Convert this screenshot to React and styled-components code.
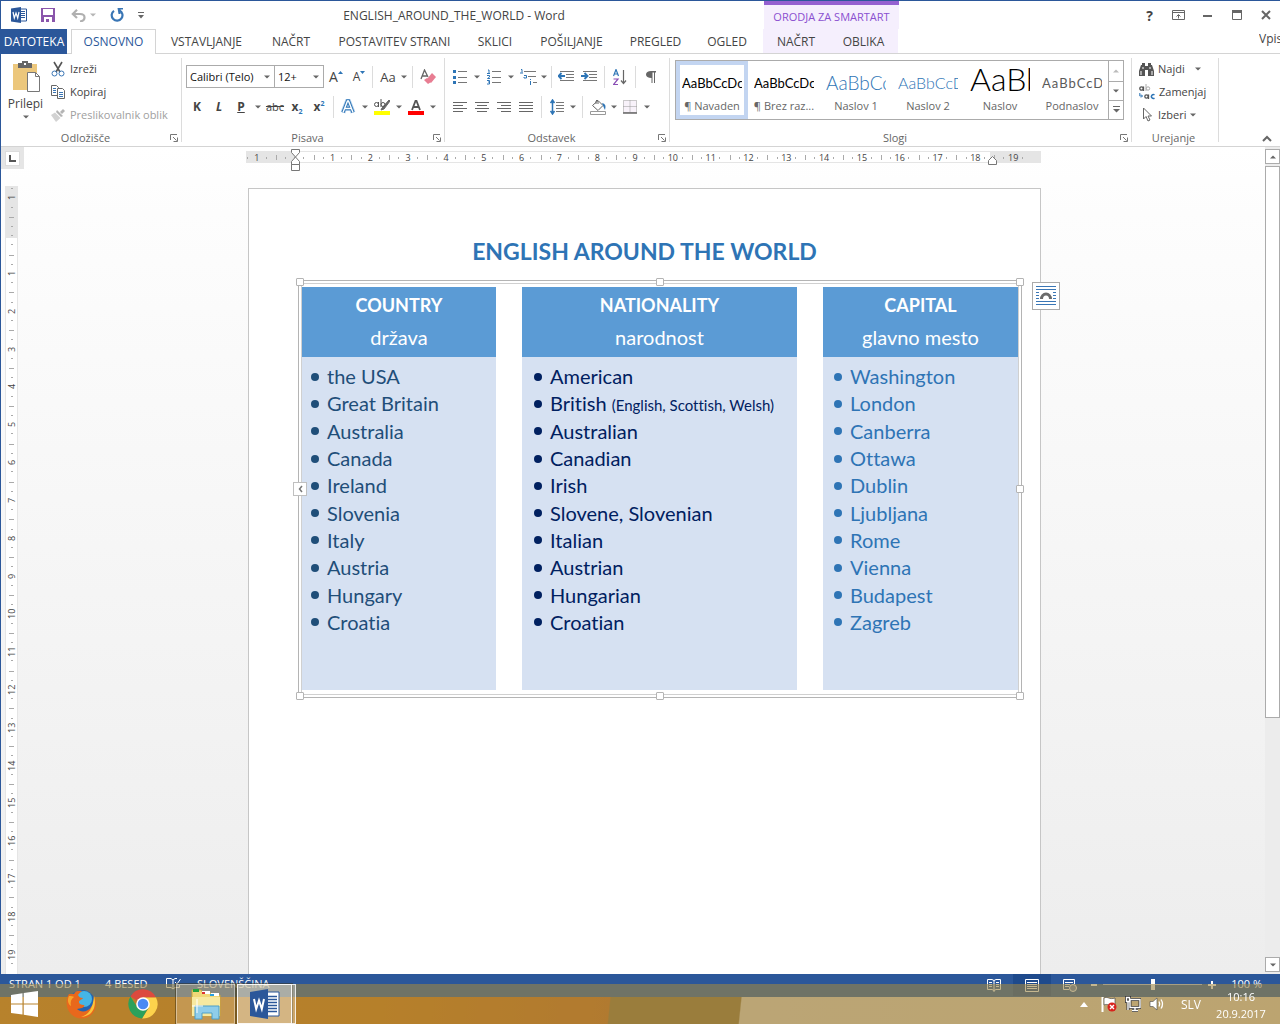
import React from "react";
import styled, { createGlobalStyle, css } from "styled-components";

const ui = `"Open Sans", "Noto Sans", sans-serif`;
const doc = `Lato, "Open Sans", sans-serif`;
const blue = "#2b579a";
const ink = "#444444";

const GlobalStyle = createGlobalStyle`
  * { box-sizing: border-box; }
  body { margin: 0; overflow: hidden; font-family: ${ui}; font-size: 12px; color: ${ink}; }
  button, select { font: inherit; color: inherit; background: none; border: 0; padding: 0; margin: 0; }
  ul { list-style: none; margin: 0; padding: 0; }
  h1, h2, p { margin: 0; }
  svg { display: block; flex: none; }
`;

const Desktop = styled.div`
  height: 100vh;
  padding-bottom: 27px;
  background: linear-gradient(96deg, #df7d08 0, #dc7804 30%, #d06a12 47.6%, #967030 47.7%, #967030 57.8%, #e8d4be 57.9%, #ead3b2 100%) bottom / 100% 40px no-repeat;
`;
const Window = styled.div`
  height: 100%;
  display: flex;
  flex-direction: column;
  border-top: 1px solid ${blue};
  border-left: 1px solid ${blue};
  background: #fff;
`;

/* title bar */
const TitleBar = styled.header`
  display: flex;
  height: 28px;
  flex: none;
`;
const QuickAccess = styled.div`
  display: flex;
  align-items: center;
  width: 143px;
  padding-left: 10px;
`;
const WindowTitle = styled.div`
  width: 620px;
  text-align: center;
  line-height: 29px;
`;
const ContextLabel = styled.div`
  width: 135px;
  border-top: 4px solid #9460d0;
  background: #f5effd;
  color: #8a4fd0;
  font-size: 11px;
  text-align: center;
  line-height: 23px;
  white-space: nowrap;
`;
const WindowButtons = styled.div`
  flex: 1;
  display: flex;
  justify-content: flex-end;
  align-items: center;
`;
const IconButton = styled.button`
  width: ${(p) => p.$w || 22}px;
  height: 22px;
  flex: none;
  display: flex;
  align-items: center;
  justify-content: center;
  white-space: nowrap;
`;

/* tabs */
const TabRow = styled.nav`
  display: flex;
  height: 25px;
  flex: none;
  border-bottom: 1px solid #d4d4d4;
`;
const Tab = styled.button`
  width: ${(p) => p.$w}px;
  flex: none;
  height: 25px;
  line-height: 25px;
  text-align: center;
  white-space: nowrap;
  ${(p) => p.$file && css`background: ${blue}; color: #fff; margin-right: 4px;`}
  ${(p) => p.$active && css`
    color: ${blue};
    background: #fff;
    border: 1px solid #d4d4d4;
    border-bottom: 0;
    line-height: 24px;
  `}
`;
const ContextTabs = styled.div`
  display: flex;
  margin-left: 3px;
  background: #f5effd;
`;
const SignIn = styled.a`
  margin-left: auto;
  width: 21px;
  overflow: hidden;
  line-height: 20px;
  color: ${ink};
  text-decoration: none;
`;

/* ribbon */
const Ribbon = styled.section`
  display: flex;
  height: 93px;
  flex: none;
  border-bottom: 1px solid #d4d4d4;
`;
const Group = styled.div`
  width: ${(p) => p.$w}px;
  flex: none;
  display: flex;
  flex-direction: column;
  position: relative;
  &::after {
    content: "";
    position: absolute;
    right: 0;
    top: 4px;
    bottom: 4px;
    width: 1px;
    background: #dcdcdc;
  }
`;
const GroupBody = styled.div`
  height: 77px;
  padding: ${(p) => p.$pad || "3px 0 0"};
  display: flex;
  flex-direction: ${(p) => (p.$row ? "row" : "column")};
  gap: ${(p) => p.$gap || 0}px;
`;
const GroupFooter = styled.div`
  display: flex;
  height: 14px;
  padding: 0 4px 0 0;
  align-items: center;
  color: #666;
  font-size: 11px;
  line-height: 14px;
  span { flex: 1; text-align: center; }
`;
const ToolRow = styled.div`
  display: flex;
  align-items: center;
  height: 23px;
`;
const Divider = styled.i`
  width: 1px;
  height: 22px;
  margin: 0 ${(p) => p.$m || 4}px;
  background: #dcdcdc;
`;
const PasteButton = styled.button`
  width: 49px;
  display: flex;
  flex-direction: column;
  align-items: center;
  gap: 2px;
  padding-top: 4px;
  line-height: 18px;
`;
const CommandList = styled.div`
  display: flex;
  flex-direction: column;
`;
const Command = styled.button`
  display: flex;
  align-items: center;
  gap: 4px;
  height: 23px;
  font-size: 11px;
  white-space: nowrap;
  color: ${(p) => (p.disabled ? "#a0a0a0" : ink)};
`;
const SplitLabel = styled.span`
  padding-right: 6px;
`;
const Combo = styled.label`
  position: relative;
  width: ${(p) => p.$w}px;
  height: 23px;
  margin-right: -1px;
  border: 1px solid #ababab;
  select {
    appearance: none;
    width: 100%;
    height: 21px;
    padding-left: 3px;
    font-size: 11px;
    color: #111;
  }
  svg { position: absolute; right: 4px; top: 9px; }
`;
const Letter = styled.span`
  font-size: ${(p) => p.$s || 12}px;
  font-weight: ${(p) => (p.$b ? 700 : 400)};
  font-style: ${(p) => (p.$i ? "italic" : "normal")};
  text-decoration: ${(p) => p.$d || "none"};
  sub, sup { font-size: 7px; line-height: 0; color: #2e75b6; }
`;

/* styles gallery */
const Gallery = styled.div`
  display: flex;
  width: 449px;
  height: 60px;
  border: 1px solid #ababab;
`;
const StyleItem = styled.button`
  width: 72px;
  height: 58px;
  flex: none;
  border: 4px solid ${(p) => (p.$on ? "#c3d5f1" : "transparent")};
  display: flex;
  flex-direction: column;
  align-items: center;
`;
const Sample = styled.span`
  width: 60px;
  height: 32px;
  flex: none;
  overflow: hidden;
  text-align: left;
  white-space: nowrap;
  font-family: ${doc};
  line-height: ${(p) => p.$lh || 36}px;
  font-size: ${(p) => p.$s || 13}px;
  font-weight: ${(p) => (p.$light ? 300 : 400)};
  color: ${(p) => p.$c || "#000"};
  letter-spacing: ${(p) => (p.$wide ? "1px" : "normal")};
`;
const StyleName = styled.span`
  flex: none;
  font-size: 11px;
  line-height: 18px;
  color: #666;
  white-space: nowrap;
`;
const GalleryNav = styled.div`
  width: 15px;
  border-left: 1px solid #ababab;
  display: grid;
  grid-template-rows: 20px 19px 19px;
  button { display: grid; place-items: center; }
  button + button { border-top: 1px solid #ababab; }
`;
const Collapse = styled.button`
  margin: auto 8px 4px auto;
`;

/* workspace */
const Workspace = styled.main`
  flex: 1;
  min-height: 0;
  display: flex;
  background: linear-gradient(#fff, #fdfdfd 8%, #ededed);
`;
const Canvas = styled.div`
  flex: 1;
  min-width: 0;
  display: flex;
  flex-direction: column;
`;
const RulerRow = styled.div`
  display: flex;
  height: 39px;
  flex: none;
`;
const Corner = styled.div`
  width: 23px;
  height: 22px;
  flex: none;
  background: #e5e5e5;
  padding: 4px;
  button {
    width: 15px;
    height: 15px;
    background: #fff;
    border: 1px solid #dcdcdc;
    display: grid;
    place-items: center;
  }
`;
const RulerSlot = styled.div`
  flex: 1;
  display: flex;
  justify-content: center;
  padding: 4px 2px 0 0;
`;
const HRuler = styled.div`
  position: relative;
  width: 795px;
  height: 12px;
  background: linear-gradient(90deg, #e5e5e5 49px, #fff 49px, #fff 744px, #e5e5e5 744px);
  outline: 1px solid #e5e5e5;
  outline-offset: -1px;
`;
const HTicks = styled.div`
  height: 12px;
  overflow: hidden;
  div.track { display: flex; width: 794px; margin-left: -8px; }
`;
const HCell = styled.span`
  flex: 1 0 0;
  width: 0;
  height: 13px;
  display: flex;
  justify-content: space-between;
  align-items: center;
  font-size: 9px;
  line-height: 13px;
  &::before { content: ""; width: 1px; height: 5px; background: #aaa; }
  &::after { content: ""; width: 1px; }
  i { width: 1px; height: 2px; background: #aaa; }
  b { font-weight: 400; width: 13px; margin: 0 -6px; text-align: center; }
`;
const Marker = styled.svg`
  position: absolute;
  left: ${(p) => p.$x}px;
  top: ${(p) => p.$y}px;
`;
const PageRow = styled.div`
  flex: 1;
  min-height: 0;
  display: flex;
`;
const VRulerSlot = styled.div`
  width: 23px;
  flex: none;
  padding-left: 4px;
`;
const VRuler = styled.div`
  width: 13px;
  height: 100%;
  overflow: hidden;
  border: solid #e5e5e5;
  border-width: 0 1px;
  background: linear-gradient(#e5e5e5 52px, #fff 52px);
  div.track { display: flex; flex-direction: column; height: 794px; margin-top: -7px; }
`;
const VCell = styled.span`
  flex: 1 0 0;
  height: 0;
  display: flex;
  flex-direction: column;
  justify-content: space-between;
  align-items: center;
  font-size: 9px;
  line-height: 11px;
  &::before { content: ""; width: 5px; height: 1px; background: #aaa; }
  &::after { content: ""; height: 1px; }
  i { width: 2px; height: 1px; background: #aaa; }
  b { font-weight: 400; writing-mode: vertical-rl; transform: rotate(180deg); height: 13px; margin: -6px 0; text-align: center; }
`;
const PageSlot = styled.div`
  flex: 1;
  display: flex;
  justify-content: center;
  padding-top: 2px;
`;
const Page = styled.article`
  position: relative;
  width: 793px;
  border: 1px solid #c6c6c6;
  border-bottom: 0;
  background: #fff;
  font-family: ${doc};
  font-variant-ligatures: none;
`;
const PageTitle = styled.h1`
  margin-top: 46px;
  font-size: 23px;
  line-height: 32px;
  color: #2e74b5;
  text-align: center;
`;
const SmartArt = styled.div`
  position: relative;
  margin: 13px 18px 0 49px;
  border: 1px solid #b4b4b4;
  padding: 2px;
`;
const SmartArtInner = styled.div`
  display: flex;
  gap: 26px;
  padding: 3px 0 4px;
  border: 1px solid #d0d0d0;
`;
const Handle = styled.i`
  position: absolute;
  left: ${(p) => p.$x};
  top: ${(p) => p.$y};
  width: 8px;
  height: 8px;
  margin: -4px;
  border: 1px solid #b4b4b4;
  border-radius: 1px;
  background: #fff;
`;
const PaneToggle = styled.button`
  position: absolute;
  left: -6px;
  top: 201px;
  width: 14px;
  height: 14px;
  display: grid;
  place-items: center;
  border: 1px solid #c0c0c0;
  background: #fff;
`;
const LayoutOptions = styled.button`
  position: absolute;
  left: 783px;
  top: 93px;
  width: 28px;
  height: 28px;
  display: grid;
  place-items: center;
  border: 1px solid #ababab;
  background: #fff;
`;
const Column = styled.section`
  flex: ${(p) => p.$grow} 0 0;
  min-width: 0;
  color: ${(p) => p.$color};
`;
const ColumnHead = styled.header`
  height: 70px;
  padding-top: 2px;
  background: #5b9bd5;
  color: #fff;
  text-align: center;
  font-size: 20px;
  line-height: 32px;
  h2 { font-size: 18px; line-height: 32px; }
`;
const ColumnList = styled.ul`
  height: 333px;
  padding: 6px 0 54px ${(p) => p.$indent}px;
  background: #d6e1f2;
  display: grid;
  grid-auto-rows: 1fr;
  font-size: 20px;
  line-height: 27px;
  li { display: flex; align-items: center; white-space: nowrap; }
  li::before {
    content: "";
    width: 8px;
    height: 8px;
    margin-right: 8px;
    border-radius: 50%;
    background: currentColor;
  }
  small { font-size: 15px; line-height: 18px; }
`;

const Scroll = styled.div`
  width: 15px;
  flex: none;
  padding: 2px 0;
  display: flex;
  flex-direction: column;
  gap: 2px;
  background: #ececec;
  button { height: 15px; flex: none; border: 1px solid #ababab; background: #fff; display: grid; place-items: center; }
`;
const ScrollTrack = styled.div`
  flex: 1;
`;
const Thumb = styled.div`
  height: 70%;
  border: 1px solid #ababab;
  background: #fff;
`;

/* status bar */
const StatusBar = styled.footer`
  display: flex;
  align-items: flex-start;
  height: 23px;
  flex: none;
  padding: 0 18px 0 8px;
  background: ${blue};
  color: #fff;
  font-size: 11px;
  line-height: 20px;
  > svg { margin-top: 3px; }
`;
const StatusItem = styled.span`
  width: ${(p) => p.$w}px;
  padding-left: ${(p) => p.$pad || 0}px;
  white-space: nowrap;
`;
const ViewButtons = styled.div`
  display: flex;
  margin-left: auto;
`;
const ViewButton = styled.button`
  width: 38px;
  height: 22px;
  display: grid;
  place-items: center;
  background: ${(p) => (p.$on ? "#1e4a8c" : "none")};
`;
const Zoom = styled.div`
  width: 125px;
  display: flex;
  align-items: center;
  height: 21px;
  margin: 0 15px 0 2px;
  gap: 6px;
  input {
    appearance: none;
    flex: 1;
    min-width: 0;
    height: 11px;
    margin: 0;
    background: linear-gradient(#b8c6de, #b8c6de) center / 100% 1px no-repeat;
  }
  input::-webkit-slider-thumb { appearance: none; width: 4px; height: 11px; background: #fff; }
`;

/* task bar */
const TaskBar = styled.div`
  position: fixed;
  left: 0;
  right: 0;
  bottom: 0;
  height: 40px;
  display: flex;
  align-items: center;
  background: rgba(157, 133, 69, 0.6);
  color: #fff;
`;
const TaskButton = styled.button`
  width: ${(p) => p.$w}px;
  height: 40px;
  display: grid;
  place-items: center;
  ${(p) => p.$open && css`
    margin-left: 2px;
    border: 1px solid rgba(255, 255, 255, ${p.$on ? 0.9 : 0.4});
    outline: 1px solid rgba(60, 50, 20, 0.5);
    background: rgba(255, 255, 255, ${p.$on ? 0.42 : 0.18});
  `}
`;
const StackEdge = styled.i`
  width: 4px;
  height: 40px;
  border: solid rgba(255, 255, 255, 0.8);
  border-width: 1px 1px 1px 0;
  background: rgba(255, 255, 255, 0.3);
`;
const Tray = styled.div`
  margin-left: auto;
  display: flex;
  align-items: center;
  gap: 8px;
  > svg:first-child { margin-right: 5px; }
`;
const Language = styled.span`
  margin-left: 8px;
`;
const Clock = styled.time`
  width: 52px;
  margin: 2px 13px 0 6px;
  text-align: center;
  font-size: 11px;
  line-height: 17px;
`;

const Svg = ({ w = 16, h = 16, children, ...rest }) => (
  <svg width={w} height={h} viewBox={`0 0 ${w} ${h}`} fill="none" aria-hidden="true" {...rest}>{children}</svg>
);
const Caret = ({ up, c = "#666" }) => (
  <Svg w={6} h={4}><path d={up ? "M0 3.5h6L3 .5z" : "M0 .5h6L3 3.5z"} fill={c} /></Svg>
);
const CaretButton = ({ w = 12, label }) => <IconButton $w={w} aria-label={label}><Caret /></IconButton>;
const Launcher = () => (
  <button aria-label="Več možnosti"><Svg w={8} h={8}><path d="M.5 6V.5H7M3 3l3.5 3.5M7.5 3.5v4h-4" stroke="#777" /></Svg></button>
);
const WordIcon = () => (
  <Svg w={16} h={16}>
    <path d="M8 2h7.500v12H8z" fill="#fff" stroke={blue} />
    <path d="M9 4.500h5M9 6.500h5M9 8.500h5M9 10.500h5" stroke={blue} />
    <path d="M0 1.500 10 0v16L0 14.500z" fill={blue} />
    <path d="m2 5 1.300 6L5 6l1.700 5L8 5" stroke="#fff" strokeWidth="1.200" />
  </Svg>
);
const Lines = ({ rows }) => (
  <Svg w={14} h={10}>{rows.map(([a, b], i) => <path key={i} d={`M${a} ${[0.5, 3.5, 6.5, 9.5][i]}H${b}`} stroke="#666" />)}</Svg>
);
const alignments = [
  ["Poravnaj levo", [[0, 14], [0, 10], [0, 14], [0, 10]]],
  ["Na sredino", [[0, 14], [2, 12], [0, 14], [2, 12]]],
  ["Poravnaj desno", [[0, 14], [4, 14], [0, 14], [4, 14]]],
  ["Obojestransko", [[0, 14], [0, 14], [0, 14], [0, 14]]],
];
const Indent = ({ right }) => (
  <Svg w={16} h={11}>
    <path d="M2 .5h14M8 3.500h8M8 6.500h8M2 9.500h14" stroke="#777" />
    <path d={right ? "M0 5h6M3.500 2 6.500 5l-3 3" : "M1 5h6M3.500 2l-3 3 3 3"} stroke="#2e75b6" strokeWidth="1.900" />
  </Svg>
);

const tabs = [
  ["VSTAVLJANJE", 101], ["NAČRT", 68], ["POSTAVITEV STRANI", 139], ["SKLICI", 62],
  ["POŠILJANJE", 91], ["PREGLED", 77], ["OGLED", 66],
];
const gallery = [
  { text: "AaBbCcDc", name: "¶ Navaden", on: true },
  { text: "AaBbCcDc", name: "¶ Brez raz..." },
  { text: "AaBbCc", name: "Naslov 1", s: 19, c: "#2e74b5", light: true },
  { text: "AaBbCcD", name: "Naslov 2", s: 16, c: "#2e74b5", light: true },
  { text: "AaBb", name: "Naslov", s: 32, lh: 28, light: true },
  { text: "AaBbCcD", name: "Podnaslov", s: 13, c: "#5a5a5a", wide: true },
];
const columns = [
  {
    head: "COUNTRY", sub: "država", grow: 194, indent: 9, color: "#1f4e79",
    items: ["the USA", "Great Britain", "Australia", "Canada", "Ireland", "Slovenia", "Italy", "Austria", "Hungary", "Croatia"],
  },
  {
    head: "NATIONALITY", sub: "narodnost", grow: 275, indent: 12, color: "#002060",
    items: ["American", "British", "Australian", "Canadian", "Irish", "Slovene, Slovenian", "Italian", "Austrian", "Hungarian", "Croatian"],
  },
  {
    head: "CAPITAL", sub: "glavno mesto", grow: 195, indent: 11, color: "#2e74b5",
    items: ["Washington", "London", "Canberra", "Ottawa", "Dublin", "Ljubljana", "Rome", "Vienna", "Budapest", "Zagreb"],
  },
];
const far = "calc(100% - 1px)";
const handles = [["1px", "1px"], ["50%", "1px"], [far, "1px"], [far, "50%"], ["1px", far], ["50%", far], [far, far]];
const marks = Array.from({ length: 21 }, (_, i) => i - 1);
const RulerMarks = ({ Cell }) => (
  <div className="track">
    {marks.map((n) => <Cell key={n}><i />{n === 0 ? <i /> : <b>{Math.abs(n)}</b>}<i /></Cell>)}
  </div>
);

function Header() {
  return (
    <>
      <TitleBar>
        <QuickAccess>
          <WordIcon />
          <IconButton $w={42} aria-label="Shrani">
            <Svg w={14} h={14}><path d="M0 0h14v14H0z" fill="#8a55ab" /><path d="M2 1h10v6H2zM3 9h8v5H3z" fill="#fff" /><path d="M5 11h3v3H5z" fill="#8a55ab" /></Svg>
          </IconButton>
          <IconButton $w={18} aria-label="Razveljavi">
            <Svg w={15} h={13}><path d="M2 5h7c3 0 4.500 1.500 4.500 3.500S12 12 9 12.500M6 .8 1.800 5 6 9" stroke="#b0b0b0" strokeWidth="2.200" /></Svg>
          </IconButton>
          <IconButton $w={12} aria-label="Možnosti razveljavitve"><Caret c="#b5b5b5" /></IconButton>
          <IconButton $w={36} aria-label="Ponovi">
            <Svg w={14} h={14}><path d="M4 2.800A5.400 5.400 0 1 0 9.500 2.400" stroke="#3a76b5" strokeWidth="2.200" /><path d="M7.500 0H13v1.500H10.500V6H8.500z" fill="#3a76b5" /></Svg>
          </IconButton>
          <IconButton $w={12} aria-label="Prilagodi">
            <Svg w={6} h={7}><path d="M0 .5h6" stroke="#666" /><path d="M0 3h6L3 6.500z" fill="#666" /></Svg>
          </IconButton>
        </QuickAccess>
        <WindowTitle>ENGLISH_AROUND_THE_WORLD - Word</WindowTitle>
        <ContextLabel>ORODJA ZA SMARTART</ContextLabel>
        <WindowButtons>
          <IconButton $w={29} aria-label="Pomoč"><Letter $b $s={14}>?</Letter></IconButton>
          <IconButton $w={29} aria-label="Možnosti traku">
            <Svg w={13} h={10}><path d="M.5.5h12v9H.5zM.5 2.500h12M6.500 8.500V5M4.500 6.500l2-2 2 2" stroke="#666" /></Svg>
          </IconButton>
          <IconButton $w={29} aria-label="Minimiraj"><Svg w={9} h={10}><path d="M0 6h9" stroke="#666" strokeWidth="2" /></Svg></IconButton>
          <IconButton $w={30} aria-label="Povečaj"><Svg w={10} h={10}><path d="M.5.5h9v9H.5z" stroke="#666" /><path d="M0 1.500h10" stroke="#666" strokeWidth="3" /></Svg></IconButton>
          <IconButton $w={28} aria-label="Zapri"><Svg w={10} h={10}><path d="m1 1 8 8M9 1 1 9" stroke="#666" strokeWidth="2" /></Svg></IconButton>
        </WindowButtons>
      </TitleBar>
      <TabRow>
        <Tab $w={66} $file>DATOTEKA</Tab>
        <Tab $w={85} $active>OSNOVNO</Tab>
        {tabs.map(([name, w]) => <Tab key={name} $w={w}>{name}</Tab>)}
        <ContextTabs>
          <Tab $w={66}>NAČRT</Tab>
          <Tab $w={69}>OBLIKA</Tab>
        </ContextTabs>
        <SignIn href="#">Vpis</SignIn>
      </TabRow>
    </>
  );
}

function ClipboardGroup() {
  return (
    <Group $w={181}>
      <GroupBody $row>
        <PasteButton>
          <Svg w={30} h={32}>
            <path d="M2 3h24v26H2z" fill="#ecc77c" />
            <path d="M7 2h4V0h6v2h4v5H7z" fill="#666" /><path d="M13 2h2v2h-2z" fill="#fff" />
            <path d="M16.500 11.500h8l4 4v15h-12z" fill="#fff" stroke="#777" /><path d="M24.500 11.500v4h4" stroke="#777" />
          </Svg>
          Prilepi
          <Caret />
        </PasteButton>
        <CommandList>
          <Command>
            <Svg><path d="M4 1l6 10M12 1 6 11" stroke="#555" strokeWidth="1.600" /><circle cx="4.500" cy="12.500" r="2.500" stroke="#3a76b5" /><circle cx="11.500" cy="12.500" r="2.500" stroke="#3a76b5" /></Svg>
            Izreži
          </Command>
          <Command>
            <Svg>
              <path d="M1.500 1.500h5l2 2v8h-7z" fill="#fff" stroke="#666" /><path d="M3 4.500h3M3 6.500h3M3 8.500h3" stroke="#3a76b5" />
              <path d="M7.500 4.500h5l2 2v8h-7z" fill="#fff" stroke="#666" /><path d="M9 8.500h4M9 10.500h4M9 12.500h4" stroke="#3a76b5" />
            </Svg>
            Kopiraj
          </Command>
          <Command disabled>
            <Svg><path d="m10 5 3-3 2 2-3 3z" fill="#b4b4b4" /><path d="m7 3 6 6-2 1-5-5z" fill="#b4b4b4" /><path d="M5 5.500 10.500 11 6 15 1 8z" fill="#d2d2d2" /></Svg>
            Preslikovalnik oblik
          </Command>
        </CommandList>
      </GroupBody>
      <GroupFooter><span>Odložišče</span><Launcher /></GroupFooter>
    </Group>
  );
}

function FontGroup() {
  return (
    <Group $w={263}>
      <GroupBody $pad="11px 0 0 4px" $gap={7}>
        <ToolRow>
          <Combo $w={89}><select aria-label="Pisava"><option>Calibri (Telo)</option></select><Caret /></Combo>
          <Combo $w={50}><select aria-label="Velikost pisave"><option>12+</option></select><Caret /></Combo>
          <IconButton $w={26} aria-label="Povečaj pisavo"><Letter $s={14}>A</Letter><Svg w={5} h={12}><path d="M0 3h5L2.500 0z" fill="#2e75b6" /></Svg></IconButton>
          <IconButton $w={20} aria-label="Pomanjšaj pisavo"><Letter>A</Letter><Svg w={5} h={12}><path d="M0 0h5L2.500 3z" fill="#2e75b6" /></Svg></IconButton>
          <Divider $m={3} />
          <IconButton $w={24} aria-label="Spremeni velikost črk"><Letter $s={13}>Aa</Letter></IconButton>
          <CaretButton w={8} label="Velikost črk" />
          <Divider />
          <IconButton $w={22} aria-label="Počisti oblikovanje">
            <Svg><path d="m1 10 3.500-9L8 8M2 7h5" stroke="#666" strokeWidth="1.300" /><path d="m7 10 5-6 4 4-5 6z" fill="#e87d92" /><path d="m4 11 3-2 4 4-3 2z" fill="#e87d92" /></Svg>
          </IconButton>
        </ToolRow>
        <ToolRow>
          <IconButton><Letter $b>K</Letter></IconButton>
          <IconButton><Letter $b $i>L</Letter></IconButton>
          <IconButton><Letter $b $d="underline">P</Letter></IconButton>
          <CaretButton label="Podčrtano" />
          <IconButton><Letter $s={11} $d="line-through">abc</Letter></IconButton>
          <IconButton><Letter $b>x<sub>2</sub></Letter></IconButton>
          <IconButton><Letter $b>x<sup>2</sup></Letter></IconButton>
          <Divider $m={3} />
          <IconButton aria-label="Učinki besedila">
            <Svg><path d="m3 13.500 4.500-11.500h1L13 13.500M5 9.500h6" stroke="#bcd6ef" strokeWidth="5" /><path d="m3 13.500 4.500-11.500h1L13 13.500M5 9.500h6" stroke="#2e75b6" strokeWidth="3.400" /><path d="m3 13.500 4.500-11.500h1L13 13.500M5 9.500h6" stroke="#fff" strokeWidth="1.400" /></Svg>
          </IconButton>
          <CaretButton label="Učinki" />
          <IconButton aria-label="Barva označevanja">
            <Svg w={16} h={16}><path d="m8 9 7-8 1 1-6 8-3 1z" fill="#666" stroke="#666" /><path d="M0 12h16v4H0z" fill="#ff0" /><circle cx="2.500" cy="5.500" r="2" stroke="#555" /><path d="M4.500 3v5M7 0v8" stroke="#555" /><circle cx="9" cy="5.500" r="2" stroke="#555" /></Svg>
          </IconButton>
          <CaretButton label="Označevanje" />
          <IconButton aria-label="Barva pisave">
            <Svg><path d="m4 11 3.500-9h1l3.500 9M5.500 8h5" stroke="#555" strokeWidth="1.800" /><path d="M0 12h16v4H0z" fill="red" /></Svg>
          </IconButton>
          <CaretButton label="Barve" />
        </ToolRow>
      </GroupBody>
      <GroupFooter><span>Pisava</span><Launcher /></GroupFooter>
    </Group>
  );
}

function ParagraphGroup() {
  return (
    <Group $w={225}>
      <GroupBody $pad="11px 0 0 4px" $gap={7}>
        <ToolRow>
          <IconButton aria-label="Oznake">
            <Svg w={14} h={14}><path d="M5 1.500h9M5 7.500h9M5 12.500h9" stroke="#777" /><path d="M0 1.500h3M0 7.500h3M0 12.500h3" stroke="#2e75b6" strokeWidth="3" /></Svg>
          </IconButton>
          <CaretButton label="Vrste oznak" />
          <IconButton aria-label="Oštevilčevanje">
            <Svg w={14} h={16}><path d="M5 2.500h9M5 8.500h9M5 13.500h9" stroke="#777" /><path d="M1 1h1v3M0 4.500h3M0 6.500h2.500v1.500L.5 9.500H3M0 11.500h2.500v3.500H0M1 13h1.500" stroke="#2e75b6" /></Svg>
          </IconButton>
          <CaretButton label="Vrste števil" />
          <IconButton aria-label="Večraven seznam">
            <Svg w={17} h={16}><path d="M4 2.500h12M8 7.500h8M13 13.500h4" stroke="#777" /><path d="M1 .5h1v3M0 4h3M4 6.500h2.500V9H4V8M10.500 12v4M10.500 10v1" stroke="#2e75b6" /></Svg>
          </IconButton>
          <CaretButton w={10} label="Ravni" />
          <Divider $m={2} />
          <IconButton $w={24} aria-label="Zmanjšaj zamik"><Indent /></IconButton>
          <IconButton aria-label="Povečaj zamik"><Indent right /></IconButton>
          <Divider />
          <IconButton aria-label="Razvrsti">
            <Svg w={14} h={16}><path d="M.5 7 3 .5 5.500 7M1.500 5h3" stroke="#2e75b6" strokeWidth="1.200" /><path d="M.5 10H5L.5 15.500H5" stroke="#8a4fb5" strokeWidth="1.200" /><path d="M10.500 1v13M8 11.500l2.500 3 2.500-3" stroke="#666" strokeWidth="1.200" /></Svg>
          </IconButton>
          <Divider />
          <IconButton aria-label="Pokaži oznake">
            <Svg w={10} h={12}><path d="M5 0h5v1.500H9V12H8V1.500H6.500V12h-1V7C2 7 0 5.500 0 3.500S2 0 5 0z" fill="#666" /></Svg>
          </IconButton>
        </ToolRow>
        <ToolRow>
          {alignments.map(([label, rows]) => <IconButton key={label} aria-label={label}><Lines rows={rows} /></IconButton>)}
          <Divider $m={4} />
          <IconButton aria-label="Razmik">
            <Svg w={14} h={16}><path d="M6 3.500h8M6 6.500h8M6 9.500h8M6 12.500h8" stroke="#777" /><path d="M2.500 1v14M.5 4l2-3 2 3M.5 12l2 3 2-3" stroke="#2e75b6" strokeWidth="1.500" /></Svg>
          </IconButton>
          <CaretButton w={10} label="Razmiki" />
          <Divider />
          <IconButton aria-label="Senčenje">
            <Svg w={17} h={16}><path d="m8 1.500 5 5-5 5-5.500-5zM6 5V2q1-2 2 0v3" fill="#fff" stroke="#666" /><path d="M12 4q5 1 3 7l-1-2z" fill="#2e75b6" /><path d="M.5 12.500h15v3H.5z" fill="#fff" stroke="#999" /></Svg>
          </IconButton>
          <CaretButton w={10} label="Barve senčenja" />
          <IconButton aria-label="Obrobe">
            <Svg w={14} h={14}><path d="M.5.5h13v12H.5zM7 .5v12M.5 6.500h13" fill="#f8f2fa" stroke="#999" strokeDasharray="1 1" /><path d="M0 13h14" stroke="#666" strokeWidth="1.500" /></Svg>
          </IconButton>
          <CaretButton label="Vrste obrob" />
        </ToolRow>
      </GroupBody>
      <GroupFooter><span>Odstavek</span><Launcher /></GroupFooter>
    </Group>
  );
}

function StylesGroup() {
  return (
    <Group $w={462}>
      <GroupBody $pad="6px 0 0 5px">
        <Gallery>
          {gallery.map((g) => (
            <StyleItem key={g.name} $on={g.on}>
              <Sample $s={g.s} $c={g.c} $lh={g.lh} $light={g.light} $wide={g.wide}>{g.text}</Sample>
              <StyleName>{g.name}</StyleName>
            </StyleItem>
          ))}
          <GalleryNav>
            <button aria-label="Prejšnji slogi"><Caret up c="#bbb" /></button>
            <button aria-label="Naslednji slogi"><Caret /></button>
            <button aria-label="Vsi slogi"><Svg w={7} h={8}><path d="M0 .5h7" stroke="#666" /><path d="M0 3h7L3.500 6.500z" fill="#666" /></Svg></button>
          </GalleryNav>
        </Gallery>
      </GroupBody>
      <GroupFooter><span>Slogi</span><Launcher /></GroupFooter>
    </Group>
  );
}

function EditingGroup() {
  return (
    <Group $w={87}>
      <GroupBody $pad="3px 0 0 7px">
        <Command>
          <Svg w={15} h={14}><path d="M2 3h1V1h3v3h3V1h3v2h1l2 6v5H9V8H6v6H0V9z" fill="#555" /><path d="M2 9v4M4 5v2M11 5v2M13 9v4" stroke="#fff" /></Svg>
          <SplitLabel>Najdi</SplitLabel><Caret />
        </Command>
        <Command>
          <Svg w={16} h={16}>
            <circle cx="2.500" cy="4.500" r="1.700" stroke="#555" strokeWidth="1.300" /><path d="M4.500 2.500V7" stroke="#555" strokeWidth="1.300" />
            <circle cx="9" cy="4.500" r="1.700" stroke="#aaa" /><path d="M7 0v7" stroke="#aaa" />
            <path d="M.8 9v3h2.500M2 10.500l1.500 1.500L2 13.500" stroke="#2e75b6" />
            <circle cx="7.500" cy="12.500" r="1.700" stroke="#555" strokeWidth="1.300" /><path d="M9.500 10.500V15" stroke="#555" strokeWidth="1.300" />
            <path d="M15.500 10.800a2 2 0 1 0 0 3.400" stroke="#2e75b6" strokeWidth="1.500" />
          </Svg>
          Zamenjaj
        </Command>
        <Command>
          <Svg w={15} h={15}><path d="M4.500 1v11l2.500-2.500L9 14l2-1-2-4h3.500z" stroke="#666" fill="#fff" /></Svg>
          Izberi<Caret />
        </Command>
      </GroupBody>
      <GroupFooter><span>Urejanje</span></GroupFooter>
    </Group>
  );
}

function Document() {
  return (
    <Page>
      <PageTitle>ENGLISH AROUND THE WORLD</PageTitle>
      <SmartArt>
        <SmartArtInner>
          {columns.map((c) => (
            <Column key={c.head} $grow={c.grow} $color={c.color}>
              <ColumnHead><h2>{c.head}</h2><p>{c.sub}</p></ColumnHead>
              <ColumnList $indent={c.indent}>
                {c.items.map((t) => (
                  <li key={t}><span>{t}{t === "British" && <> <small>(English, Scottish, Welsh)</small></>}</span></li>
                ))}
              </ColumnList>
            </Column>
          ))}
        </SmartArtInner>
        {handles.map(([x, y]) => <Handle key={x + y} $x={x} $y={y} />)}
        <PaneToggle aria-label="Podokno z besedilom"><Svg w={5} h={8}><path d="M4 1 1.500 4 4 7" stroke="#777" strokeWidth="1.500" /></Svg></PaneToggle>
      </SmartArt>
      <LayoutOptions aria-label="Možnosti postavitve">
        <Svg w={20} h={20}>
          <path d="M0 .5h20M0 3.500h20M0 6.500h3M17 6.500h3M0 9.500h3M17 9.500h3M0 12.500h3M17 12.500h3M0 15.500h20M0 18.500h20" stroke="#3a76b5" />
          <path d="M5.500 13a4.500 5 0 0 1 9 0" stroke="#6a6a6a" strokeWidth="3" />
        </Svg>
      </LayoutOptions>
    </Page>
  );
}

function Task() {
  return (
    <TaskBar>
      <TaskButton $w={50} aria-label="Začetek">
        <Svg w={28} h={26}><path d="M0 4 11.500 2.300V12.400H0zM12.700 2.100 27 0v12.400H12.700zM0 13.600h11.500v10L0 22zM12.700 13.600H27V26l-14.300-2.200z" fill="#fff" /></Svg>
      </TaskButton>
      <TaskButton $w={62} aria-label="Firefox">
        <Svg w={30} h={30}>
          <circle cx="16" cy="14" r="13" fill="#2463b0" /><circle cx="18" cy="10" r="8" fill="#45b5e5" />
          <path d="M3 5C-1 11 0 20 5 25c6 6 16 6 21 0 4-4 5-12 2-18 0 5 0 8-3 11-3 5-10 6-14 2l5-1c2-1 3-2 2-3-3 0-5-1-5-3 0-2 3-2 4-4-3 0-4-1-5-3 1-2 3-3 4-4C12 1 9 2 8 5 6 5 4 5 3 5z" fill="#e8681c" />
          <path d="M28 7c2 6 1 14-4 18-3 2-7 3-9 3 7-2 12-8 13-21z" fill="#fbc33a" /><path d="M3 7c2 0 4 0 5 1-3 2-4 5-3 9C2 15 1 11 3 7z" fill="#f8a52a" />
        </Svg>
      </TaskButton>
      <TaskButton $w={62} aria-label="Chrome">
        <Svg w={30} h={30}>
          <path d="M15 15 2.400 7.500A14.500 14.500 0 0 1 28 8.500H15z" fill="#dc4a3e" />
          <path d="M15 8.500h13A14.500 14.500 0 0 1 14 29.500l7-11z" fill="#fdd34c" />
          <path d="M2.400 7.500A14.500 14.500 0 0 0 14 29.500l6.500-11-11 0z" fill="#2ba15b" />
          <circle cx="15" cy="15" r="6.800" fill="#fff" /><circle cx="15" cy="15" r="5.300" fill="#4a8af4" />
        </Svg>
      </TaskButton>
      <TaskButton $w={59} $open aria-label="Raziskovalec">
        <Svg w={32} h={32}>
          <path d="M2 2h9l2 3h8l2 2h7v21H2z" fill="#f0d878" stroke="#c9a53c" /><path d="M3 1h6v3H3z" fill="#24a33c" /><path d="M12 3h8v3h-8z" fill="#fff" /><path d="M12 4h3v2h-3z" fill="#d33" /><path d="M21 5h8v3h-8z" fill="#fff" /><path d="M20 6h4v2h-4z" fill="#28a0e0" />
          <path d="M2 9h28v19H2z" fill="#f7e9a0" /><path d="M5 18h24v13h-7v-6H12v6H5z" fill="#8fcdea" stroke="#4d9fc8" /><path d="M7 11v14M2 18h11" stroke="#fff" />
        </Svg>
      </TaskButton>
      <TaskButton $w={55} $open $on aria-label="Word">
        <Svg w={30} h={30}><path d="M16 3h13v24H16z" fill="#fff" stroke={blue} /><path d="M18 7.500h9M18 10.500h9M18 13.500h9M18 16.500h9M18 19.500h9M18 22.500h9" stroke={blue} strokeWidth="1.500" /><path d="M0 3 18 0v30L0 27z" fill={blue} /><path d="m4 10 2.200 10L9 11.500 11.800 20 14 10" stroke="#fff" strokeWidth="2" /></Svg>
      </TaskButton>
      <StackEdge />
      <Tray>
        <Svg w={8} h={5}><path d="M0 5h8L4 0z" fill="#fff" /></Svg>
        <Svg><path d="M1.500 1v15" stroke="#fff" strokeWidth="2" /><path d="M3 2c4-2 5 2 11 0v7C9 11 7 7 3 9z" fill="#fff" stroke="#333" strokeWidth=".6" /><circle cx="11" cy="11" r="4.500" fill="#d8231c" /><path d="m9 9 4 4M13 9l-4 4" stroke="#fff" strokeWidth="1.400" /></Svg>
        <Svg><path d="M5 3.500h10v8H5zM7 14.500h6M10 11.500v3M1.500 1.500h3v4h-3zM3 5.500V14" stroke="#333" strokeWidth="3" /><path d="M5 3.500h10v8H5zM7 14.500h6M10 11.500v3M1.500 1.500h3v4h-3zM3 5.500V14" stroke="#fff" strokeWidth="1.400" /></Svg>
        <Svg><path d="M1 5.500h3L8 2v12l-4-3.500H1z" fill="#fff" stroke="#444" strokeWidth=".6" /><path d="M10 5.500q1.500 2.500 0 5M12 3.500q3 4.500 0 9" stroke="#fff" strokeWidth="1.300" /></Svg>
        <Language>SLV</Language>
        <Clock>10:16<br />20.9.2017</Clock>
      </Tray>
    </TaskBar>
  );
}

export default function App() {
  return (
    <Desktop>
      <GlobalStyle />
      <Window>
        <Header />
        <Ribbon>
          <ClipboardGroup />
          <FontGroup />
          <ParagraphGroup />
          <StylesGroup />
          <EditingGroup />
          <Collapse aria-label="Strni trak"><Svg w={10} h={7}><path d="m1 6 4-4 4 4" stroke="#666" strokeWidth="2" /></Svg></Collapse>
        </Ribbon>
        <Workspace>
          <Canvas>
            <RulerRow>
              <Corner><button aria-label="Tabulator"><Svg w={7} h={7}><path d="M1 0v6h6" stroke="#555" strokeWidth="2" /></Svg></button></Corner>
              <RulerSlot>
                <HRuler>
                  <HTicks><RulerMarks Cell={HCell} /></HTicks>
                  <Marker $x={45} $y={-2} width="9" height="22" viewBox="0 0 9 22"><path d="M.5.500h8v3l-4 4.500 4 4.500v3H.5v-3l4-4.500-4-4.500zM.5 15.500h8v6h-8z" fill="#fff" stroke="#777" /></Marker>
                  <Marker $x={742} $y={5} width="9" height="9" viewBox="0 0 9 9"><path d="M.5 8.500V4.500l4-4 4 4v4z" fill="#fff" stroke="#777" /></Marker>
                </HRuler>
              </RulerSlot>
            </RulerRow>
            <PageRow>
              <VRulerSlot><VRuler><RulerMarks Cell={VCell} /></VRuler></VRulerSlot>
              <PageSlot><Document /></PageSlot>
            </PageRow>
          </Canvas>
          <Scroll>
            <button aria-label="Gor"><Caret up /></button>
            <ScrollTrack><Thumb /></ScrollTrack>
            <button aria-label="Dol"><Caret /></button>
          </Scroll>
        </Workspace>
        <StatusBar>
          <StatusItem $w={96}>STRAN 1 OD 1</StatusItem>
          <StatusItem $w={61}>4 BESED</StatusItem>
          <Svg w={15} h={13}><path d="M.5 1.500H5L7 3v9l-2-1.500H.5zM7 3l2-1.500h2M7 12l2-1.500h4.500V8M9 5l2 2 3.500-5" stroke="#fff" /></Svg>
          <StatusItem $w={106} $pad={16}>SLOVENŠČINA</StatusItem>
          <ViewButtons>
            <ViewButton aria-label="Bralni način"><Svg w={14} h={13}><path d="M.5.500H5l2 1 2-1h4.500v10H9l-2 1-2-1H.5zM7 1v12M2 3.500h3M2 5.500h3M2 7.500h3M9 3.500h3M9 5.500h3M9 7.500h3" stroke="#fff" /></Svg></ViewButton>
            <ViewButton $on aria-label="Tiskana postavitev"><Svg w={14} h={13}><path d="M.5.500h13v12H.5zM2 3.500h10M2 5.500h10M2 7.500h10M2 9.500h10" stroke="#fff" /></Svg></ViewButton>
            <ViewButton aria-label="Spletna postavitev"><Svg w={14} h={13}><path d="M6 10.500H.5V.5h11V5M2 3.500h8M2 5.500h5M2 7.500h4" stroke="#fff" /><circle cx="10" cy="9" r="3.500" stroke="#fff" fill="#6b86b5" /></Svg></ViewButton>
          </ViewButtons>
          <Zoom>
            <Svg w={6} h={8}><path d="M0 4h6" stroke="#fff" strokeWidth="2" /></Svg>
            <input type="range" aria-label="Povečava" defaultValue="50" />
            <Svg w={8} h={8}><path d="M0 4h8M4 0v8" stroke="#fff" strokeWidth="2" /></Svg>
          </Zoom>
          <span>100 %</span>
        </StatusBar>
      </Window>
      <Task />
    </Desktop>
  );
}
